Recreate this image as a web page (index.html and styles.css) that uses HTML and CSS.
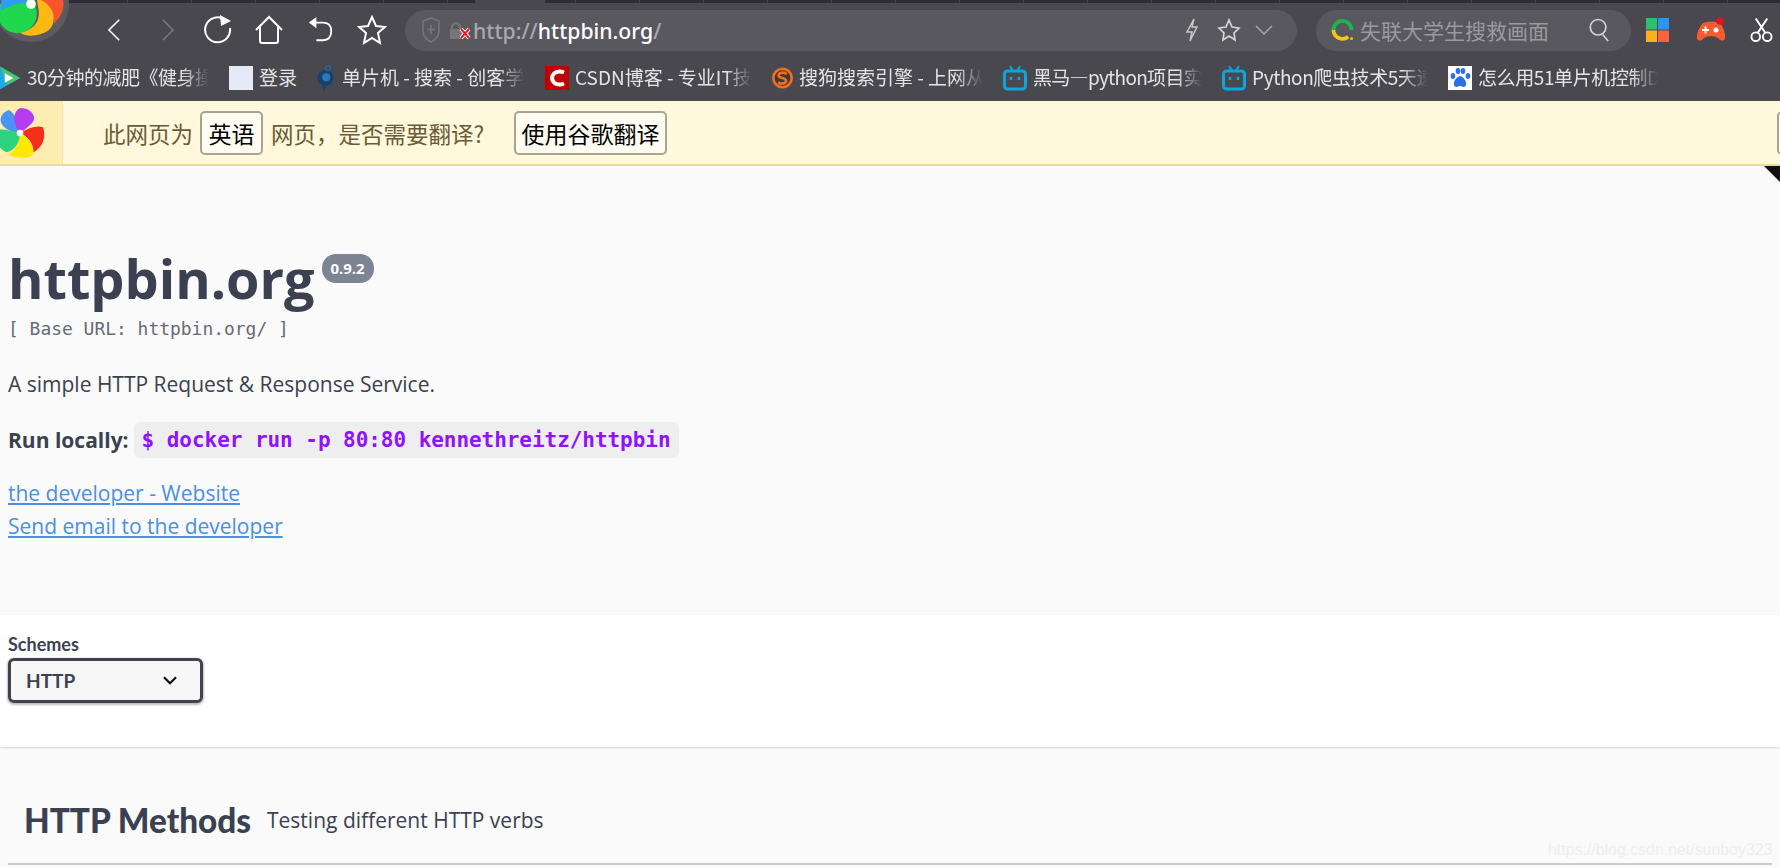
FILE: index.html
```html
<!DOCTYPE html>
<html lang="zh-CN">
<head>
<meta charset="utf-8">
<title>httpbin.org</title>
<link rel="stylesheet" href="styles.css">
</head>
<body>
<header class="chrome">
  <div class="tabstrip"><div class="tab-active"></div></div>
  <svg class="app-logo" viewBox="-40 -40 80 80">
    <circle r="39" fill="#5c5c60"/>
    <path d="M4-8L30-10C36-2 34 10 24 20C24 8 16-2 4-8Z" fill="#f8552c"/>
    <path d="M6-6C24 0 28 18 18 27C8 34-6 34-12 29C0 28 9 20 8 8Z" fill="#fdb813"/>
    <circle cx="-14" cy="10" r="20" fill="#1fd84d"/>
    <path d="M0 0C-8-2-20 0-31 7L-30-12L4-12Z" fill="#2f9cf0"/>
    <circle r="5" fill="#fff"/>
  </svg>
  <div class="toolbar">
    <svg class="nav-icon nav-back" viewBox="0 0 24 30"><path d="M18 2L5 15L18 28"/></svg>
    <svg class="nav-icon nav-forward" viewBox="0 0 24 30"><path d="M6 2L19 15L6 28"/></svg>
    <svg class="nav-icon nav-reload" viewBox="0 0 30 30"><path d="M26 13A12.500 12.500 0 1 1 18 3"/><path class="solid" d="M16 0L27 6L17 11Z"/></svg>
    <svg class="nav-icon nav-home" viewBox="0 0 30 30"><path d="M2 15L15 2L28 15M6 12V26Q6 28 8 28H22Q24 28 24 26V12"/></svg>
    <svg class="nav-icon nav-undo" viewBox="0 0 28 30"><path d="M2 7H16Q25 7 25 16Q25 26 16 26H9"/><path class="solid" d="M9 1V13L1 7Z"/></svg>
    <svg class="nav-icon nav-star" viewBox="0 0 30 30"><path d="M15 2L19 11L28 12L21 18L23 28L15 23L7 28L9 18L2 12L11 11Z"/></svg>
    <div class="address">
      <svg class="addr-shield" viewBox="0 0 20 26"><path d="M10 1L18 4V14Q18 21 10 25Q2 21 2 14V4Z"/><path d="M10 8V17M6 12.500H14"/></svg>
      <svg class="addr-lock" viewBox="0 0 22 20"><rect x="1" y="9" width="12" height="10" fill="#77777b"/><path d="M3 9V6Q7 0 11 6V9" fill="none" stroke="#77777b" stroke-width="2"/><path d="M12 9L20 18M20 9L12 18" stroke="#fff" stroke-width="4"/><path d="M12 9L20 18M20 9L12 18" stroke="#e8192c" stroke-width="2"/></svg>
      <span class="url"><span class="url-dim">http://</span>httpbin.org<span class="url-dim">/</span></span>
      <svg class="addr-bolt" viewBox="0 0 14 24"><path d="M9 1L2 14H7L5 23L12 9H7Z"/></svg>
      <svg class="addr-star" viewBox="0 0 24 24"><path d="M12 2L15 9L22 10L17 15L18 22L12 18L6 22L7 15L2 10L9 9Z"/></svg>
      <svg class="addr-more" viewBox="0 0 18 12"><path d="M1 2L9 10L17 2"/></svg>
    </div>
    <div class="search">
      <svg class="search-logo" viewBox="0 0 24 26"><path d="M2.500 13A9.500 9.500 0 0 1 21.500 13" fill="none" stroke="#22b14c" stroke-width="4"/><path d="M2.500 13A9.500 9.500 0 0 0 18 20" fill="none" stroke="#f5c518" stroke-width="4"/><circle cx="21.500" cy="22" r="1.500" fill="#f5c518"/></svg>
      <span class="search-text">失联大学生搜救画面</span>
      <svg class="search-glass" viewBox="0 0 24 26"><circle cx="11" cy="10" r="8.500"/><path d="M16 18L22 25"/></svg>
    </div>
    <svg class="ext-grid" viewBox="0 0 23 24"><rect width="11" height="11.500" fill="#2fbf71"/><rect x="12" width="11" height="11.500" fill="#2d93f5"/><rect y="12.500" width="11" height="11.500" fill="#fdb01a"/><rect x="12" y="12.500" width="11" height="11.500" fill="#fb6340"/></svg>
    <svg class="ext-game" viewBox="0 0 30 26"><path d="M7 6Q15 3 24 6Q30 14 29 22Q26 26 22 21Q15 17 8 21Q4 26 1 22Q0 14 7 6Z" fill="#fb5a2e"/><path d="M6 13H13M9.500 9.500V16.500" stroke="#fff" stroke-width="1.800"/><circle cx="20" cy="13" r="2.500" fill="#fff"/><circle cx="24" cy="4" r="3.800" fill="#e8101f"/></svg>
    <svg class="ext-scissors" viewBox="0 0 24 26"><circle cx="6" cy="20" r="4.500"/><circle cx="18" cy="20" r="4.500"/><path d="M8 16L18 1M16 16L6 1"/></svg>
  </div>
  <nav class="bookmarks">
    <a class="bm bm-first"><svg class="bm-icon" viewBox="0 0 22 26"><path d="M0 1L21 13L0 25Z" fill="#21a7e8"/><path d="M0 1L21 13L8 20Z" fill="#46c66a"/><path d="M5 8L14 13L5 18Z" fill="#fff"/></svg><span class="bm-text bm-t1">30分钟的减肥《健身操</span></a>
    <a class="bm"><span class="bm-blank"></span><span class="bm-text bm-short">登录</span></a>
    <a class="bm"><svg class="bm-icon" viewBox="0 0 22 32"><circle cx="11" cy="16" r="10" fill="#17406d"/><circle cx="12" cy="15" r="5" fill="#2e78b8"/><circle cx="14" cy="4" r="3" fill="none" stroke="#2a5f94" stroke-width="2"/><path d="M8 24L10 31" stroke="#17406d" stroke-width="3"/></svg><span class="bm-text bm-t3">单片机 - 搜索 - 创客学</span></a>
    <a class="bm"><svg class="bm-icon bm-wide" viewBox="0 0 24 24"><rect width="24" height="24" fill="#c30000"/><path d="M19 6.500Q13 4 9 7.500Q5 12 9 16.500Q13 20 19 17.500" fill="none" stroke="#fff" stroke-width="4"/></svg><span class="bm-text bm-t4">CSDN博客 - 专业IT技</span></a>
    <a class="bm"><svg class="bm-icon" viewBox="0 0 24 26"><circle cx="12" cy="13" r="10.500" fill="#3a3a3e" stroke="#f26d1c" stroke-width="3"/><path d="M17 8.500Q12 5 8 8.500Q6 12 12 13Q18 15 15.500 18Q11 21 7 18" fill="none" stroke="#f26d1c" stroke-width="3"/></svg><span class="bm-text bm-t5">搜狗搜索引擎 - 上网从</span></a>
    <a class="bm"><svg class="bm-icon bm-tv" viewBox="0 0 24 26"><path d="M7 1L10 6M17 1L14 6" stroke="#0ea5dc" stroke-width="2"/><rect x="1.500" y="6" width="21" height="18" rx="3" fill="none" stroke="#0ea5dc" stroke-width="3"/><path d="M8 12V15M16 12V15" stroke="#0ea5dc" stroke-width="2.500"/></svg><span class="bm-text bm-t6">黑马—python项目实</span></a>
    <a class="bm"><svg class="bm-icon bm-tv" viewBox="0 0 24 26"><path d="M7 1L10 6M17 1L14 6" stroke="#0ea5dc" stroke-width="2"/><rect x="1.500" y="6" width="21" height="18" rx="3" fill="none" stroke="#0ea5dc" stroke-width="3"/><path d="M8 12V15M16 12V15" stroke="#0ea5dc" stroke-width="2.500"/></svg><span class="bm-text bm-t7">Python爬虫技术5天速</span></a>
    <a class="bm"><svg class="bm-icon bm-paw" viewBox="0 0 24 24"><rect width="24" height="24" fill="#fff"/><g fill="#2f6fe4"><ellipse cx="5" cy="10" rx="2.300" ry="3"/><ellipse cx="10" cy="5" rx="2.300" ry="3"/><ellipse cx="15" cy="5" rx="2.300" ry="3"/><ellipse cx="20" cy="10" rx="2.300" ry="3"/><path d="M12 10Q8 11 6 16Q5 21 9 21Q12 19 15 21Q19 21 18 16Q16 11 12 10Z"/></g></svg><span class="bm-text bm-t8">怎么用51单片机控制D</span></a>
  </nav>
</header>
<div class="translate">
  <div class="translate-logo">
    <svg class="pinwheel" viewBox="-26 -26 52 52">
      <path d="M0 0C-22-2-26-18-12-24C-6-22-2-12 0 0Z" fill="#4a94f6"/>
      <path d="M0 0C-8-10-8-22 0-26C14-26 18-14 12-10C8-6 4-3 0 0Z" fill="#b53cf0"/>
      <path d="M0 0C10-6 18-8 24-6C28 6 22 16 14 20C14 10 8 4 0 0Z" fill="#f4301c"/>
      <path d="M0 0C8 4 14 10 14 22C8 28-6 26-12 22C-4 18 0 8 0 0Z" fill="#fde800"/>
      <path d="M0 0C0 8-4 18-14 20C-24 16-26 6-24-4C-16-4-8-2 0 0Z" fill="#2fd27d"/>
      <circle r="3.500" fill="#fff"/>
    </svg>
  </div>
  <span class="tr-text tr-lead">此网页为</span>
  <button class="tr-btn tr-lang">英语</button>
  <span class="tr-text tr-mid">网页，是否需要翻译?</span>
  <button class="tr-btn tr-go">使用谷歌翻译</button>
  <button class="tr-btn tr-close"></button>
</div>
<div class="corner"></div>
<main>
  <section class="info">
    <h1 class="title">httpbin.org<span class="version">0.9.2</span></h1>
    <p class="base-url">[ Base URL: httpbin.org/ ]</p>
    <p class="desc">A simple HTTP Request &amp; Response Service.</p>
    <p class="run"><b>Run locally:</b> <code class="cmd">$ docker run -p 80:80 kennethreitz/httpbin</code></p>
    <p class="links"><a href="#">the developer - Website</a><br><a href="#">Send email to the developer</a></p>
  </section>
  <section class="schemes">
    <div class="schemes-label">Schemes</div>
    <div class="select"><span>HTTP</span><svg class="chevron" viewBox="0 0 14 10"><path d="M1.500 2L7 7.500L12.500 2"/></svg></div>
  </section>
  <section class="ops">
    <h2 class="tag"><span class="tag-name">HTTP Methods</span><small class="tag-desc">Testing different HTTP verbs</small></h2>
  </section>
</main>
<div class="watermark">https://blog.csdn.net/sunboy323</div>
</body>
</html>
```
FILE: styles.css
```css
* { box-sizing: border-box; }
html, body { margin: 0; height: 867px; overflow: hidden; }
body { background: #fafafa; font-family: "Open Sans", "Noto Sans CJK SC", sans-serif; color: #3b4151; position: relative; }

.chrome { background: #48484e; height: 101px; position: relative; overflow: hidden; }
.tabstrip { height: 3px; background: repeating-linear-gradient(90deg, #2c2c37 0 63px, #45454c 63px 64px); }
.tab-active { width: 70px; height: 3px; margin-left: 475px; background: #48484e; }
.app-logo { position: absolute; left: -8px; top: -35px; width: 78px; height: 78px; }

.toolbar { height: 54px; display: flex; align-items: center; padding-left: 105px; }
.nav-icon { fill: none; stroke: #fff; stroke-width: 2; flex: none; }
.nav-icon .solid { fill: #fff; stroke: none; }
.nav-back { width: 19px; height: 26px; }
.nav-forward { width: 19px; height: 26px; margin-left: 34px; stroke: #77777b; }
.nav-reload { width: 30px; height: 30px; margin-left: 27px; }
.nav-home { width: 30px; height: 30px; margin-left: 20px; }
.nav-undo { width: 26px; height: 28px; margin-left: 24px; }
.nav-star { width: 30px; height: 30px; margin-left: 23px; }

.address { width: 892px; height: 41px; margin-left: 18px; background: #58585e; border-radius: 21px; display: flex; align-items: center; padding-left: 16px; flex: none; }
.addr-shield { width: 20px; height: 26px; fill: none; stroke: #77777b; stroke-width: 1.500; flex: none; }
.addr-lock { width: 22px; height: 20px; margin-left: 8px; flex: none; }
.url { margin-left: 2px; font-size: 21.200px; font-weight: 500; color: #fff; font-family: "Noto Sans", sans-serif; flex: 1; }
.url-dim { color: #a9a9ad; }
.addr-bolt { width: 14px; height: 24px; fill: none; stroke: #c6c6c8; stroke-width: 1.500; flex: none; }
.addr-star { width: 24px; height: 24px; margin-left: 18px; fill: none; stroke: #d6d6d8; stroke-width: 1.700; flex: none; }
.addr-more { width: 18px; height: 12px; margin-left: 14px; margin-right: 24px; fill: none; stroke: #a9a9ad; stroke-width: 1.500; flex: none; }

.search { width: 315px; height: 41px; margin-left: 19px; background: #58585e; border-radius: 21px; display: flex; align-items: center; padding-left: 15px; flex: none; }
.search-logo { width: 23px; height: 26px; flex: none; }
.search-text { margin-left: 6px; font-size: 21px; color: #9a9a9e; white-space: nowrap; flex: 1; font-family: "Noto Sans CJK SC", sans-serif; }
.search-glass { width: 22px; height: 24px; margin-right: 21px; fill: none; stroke: #d6d6d8; stroke-width: 1.800; flex: none; }
.ext-grid { width: 23px; height: 24px; margin-left: 15px; flex: none; }
.ext-game { width: 30px; height: 26px; margin-left: 27px; flex: none; }
.ext-scissors { width: 23px; height: 26px; margin-left: 24px; fill: none; stroke: #fff; stroke-width: 2; flex: none; }

.bookmarks { height: 44px; padding-bottom: 2px; display: flex; align-items: center; white-space: nowrap; font-family: "Noto Sans CJK SC", sans-serif; }
.bm { display: flex; align-items: center; flex: none; margin-left: 20px; color: #e4e4e6; font-size: 19px; }
.bm-first { margin-left: 0; }
.bm-icon { width: 21px; height: 26px; flex: none; }
.bm-wide { width: 24px; height: 24px; }
.bm-tv { width: 24px; height: 26px; }
.bm-paw { width: 24px; height: 24px; }
.bm-blank { width: 24px; height: 24px; background: #e4eaf6; flex: none; }
.bm-text { margin-left: 6px; padding-bottom: 4px; overflow: hidden; -webkit-mask-image: linear-gradient(90deg, #000 85%, transparent); mask-image: linear-gradient(90deg, #000 85%, transparent); }
.bm-short { width: 38px; margin-right: -2px; -webkit-mask-image: none; mask-image: none; }
.bm-t1 { width: 182px; letter-spacing: -0.500px; }
.bm-t3 { width: 183px; }
.bm-t4 { width: 177px; }
.bm-t5 { width: 184px; }
.bm-t6 { width: 169px; letter-spacing: -0.700px; }
.bm-t7 { width: 176px; letter-spacing: -0.400px; }
.bm-t8 { width: 180px; letter-spacing: -0.400px; }

.translate { height: 65px; background: #fff8dc; border-bottom: 2px solid #e9dca0; display: flex; align-items: center; white-space: nowrap; font-family: "Noto Sans CJK SC", sans-serif; overflow: hidden; }
.translate-logo { width: 63px; height: 63px; background: #fdedb0; border-right: 1px solid #f6e6a8; display: flex; align-items: center; flex: none; }
.pinwheel { width: 50px; height: 54px; margin-left: -5px; flex: none; }
.tr-text { color: #6b5a35; font-size: 22.500px; }
.tr-lead { margin-left: 40px; }
.tr-mid { margin-left: 8px; width: 215px; flex: none; }
.tr-btn { height: 44px; padding: 0; border: 2px solid #a9a58c; border-radius: 5px; background: #fffdf3; color: #000; font-family: inherit; font-size: 23px; flex: none; }
.tr-lang { width: 63px; margin-left: 7px; }
.tr-go { width: 153px; margin-left: 28px; }
.tr-close { width: 30px; margin-left: 1110px; }

.corner { position: absolute; right: 0; top: 166px; width: 0; height: 0; border-top: 16px solid #111; border-left: 16px solid transparent; }

.info { height: 449px; padding: 79px 8px 0 8px; }
.title { margin: 0; font-size: 54px; line-height: 66px; font-weight: 700; color: #3b4151; display: flex; align-items: flex-start; }
.version { margin: 9px 0 0 7px; width: 52px; height: 29px; border-radius: 14px; background: #7d8492; color: #fff; font-size: 15px; line-height: 29px; text-align: center; font-weight: 700; }
.base-url { margin: 6px 0 0; font-family: "DejaVu Sans Mono", monospace; font-size: 17.950px; line-height: 24px; color: #666a75; }
.desc { margin: 28px 0 0; font-size: 21px; line-height: 30px; color: #3b4151; }
.run { margin: 23px 0 0; font-size: 21px; line-height: 36px; color: #3b4151; display: flex; align-items: center; gap: 5px; }
.run b { font-weight: 700; }
.cmd { font-family: "DejaVu Sans Mono", monospace; font-weight: 700; font-size: 21px; color: #9012fe; background: #eeeeee; border-radius: 6px; padding: 0 8px; height: 36px; line-height: 36px; letter-spacing: -0.050px; }
.links { margin: 19px 0 0; font-size: 21px; line-height: 33px; }
.links a { color: #4990e2; text-decoration: underline; }

.schemes { height: 132px; background: #fff; padding: 18px 8px 0; box-shadow: 0 1px 2px rgba(0, 0, 0, .15); position: relative; }
.schemes-label { font-family: "Lato", sans-serif; font-size: 18px; line-height: 22px; font-weight: 700; }
.select { width: 195px; height: 45px; margin-top: 3px; border: 3px solid #41444e; border-radius: 6px; background: #f7f7f7; box-shadow: 0 1px 2px 1px rgba(0, 0, 0, .25); display: flex; align-items: center; justify-content: space-between; padding: 0 22px 0 15px; font-family: "Lato", sans-serif; font-size: 19px; font-weight: 700; }
.chevron { width: 16px; height: 11px; fill: none; stroke: #111; stroke-width: 2; }

.ops { padding: 51px 8px 0; }
.tag { margin: 0; height: 67px; padding: 0 0 22px 16px; border-bottom: 2px solid #c9ccd2; display: flex; align-items: center; font-weight: 700; }
.tag-name { width: 243px; font-family: "Lato", sans-serif; font-size: 33.300px; font-weight: 900; color: #3b4151; white-space: nowrap; flex: none; }
.tag-desc { font-size: 21px; font-weight: 400; color: #3b4151; }

.watermark { position: absolute; left: 1548px; top: 841px; font-family: "Liberation Sans", sans-serif; font-size: 15.900px; color: #eeeeee; }
```
